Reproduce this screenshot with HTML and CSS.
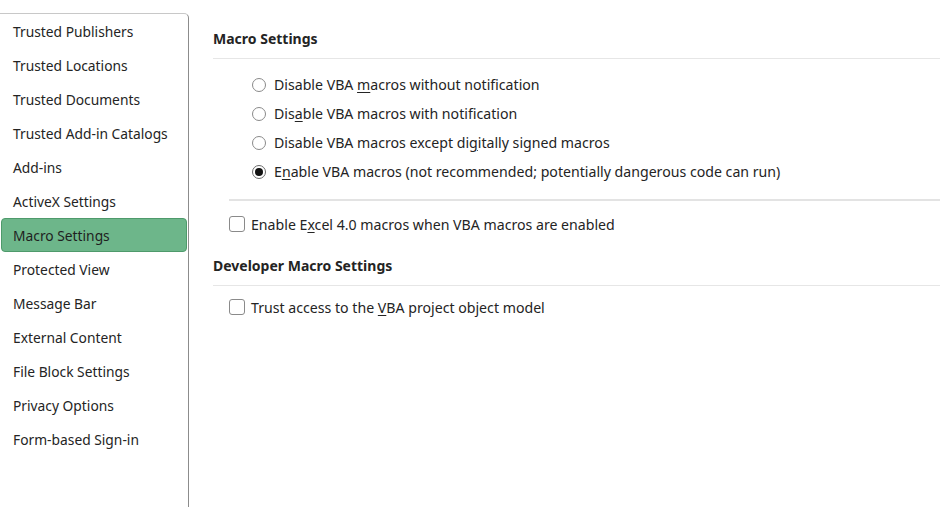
FILE: index.html
```html
<!DOCTYPE html>
<html>
<head>
<meta charset="utf-8">
<link rel="stylesheet" href="styles.css">
</head>
<body>
<div class="page">
  <nav class="sidebar">
    <div class="nav-item">Trusted Publishers</div>
    <div class="nav-item">Trusted Locations</div>
    <div class="nav-item">Trusted Documents</div>
    <div class="nav-item">Trusted Add-in Catalogs</div>
    <div class="nav-item">Add-ins</div>
    <div class="nav-item">ActiveX Settings</div>
    <div class="nav-item selected">Macro Settings</div>
    <div class="nav-item">Protected View</div>
    <div class="nav-item">Message Bar</div>
    <div class="nav-item">External Content</div>
    <div class="nav-item">File Block Settings</div>
    <div class="nav-item">Privacy Options</div>
    <div class="nav-item">Form-based Sign-in</div>
  </nav>
  <main class="content">
    <h2 class="section-title first">Macro Settings</h2>
    <div class="radio-group">
      <div class="radio-row"><span class="radio"></span><span>Disable VBA <u>m</u>acros without notification</span></div>
      <div class="radio-row"><span class="radio"></span><span>Dis<u>a</u>ble VBA macros with notification</span></div>
      <div class="radio-row"><span class="radio"></span><span>Disable VBA macros except di<u>g</u>itally signed macros</span></div>
      <div class="radio-row"><span class="radio checked"></span><span>E<u>n</u>able VBA macros (not recommended; potentially dangerous code can run)</span></div>
    </div>
    <div class="separator"></div>
    <div class="check-row"><span class="checkbox"></span><span>Enable E<u>x</u>cel 4.0 macros when VBA macros are enabled</span></div>
    <h2 class="section-title">Developer Macro Settings</h2>
    <div class="check-row dev"><span class="checkbox"></span><span>Trust access to the <u>V</u>BA project object model</span></div>
  </main>
</div>
</body>
</html>
```

FILE: styles.css
```css
html, body {
  margin: 0;
  padding: 0;
  background: #ffffff;
}
body {
  font-family: "Noto Sans", "Open Sans", sans-serif;
  font-size: 14px;
  color: #242424;
  width: 940px;
  height: 507px;
  overflow: hidden;
}
.page {
  display: flex;
  height: 507px;
}
.sidebar {
  box-sizing: border-box;
  width: 190px;
  margin-left: -1px;
  margin-top: 13px;
  border: 1px solid #8c8c8c;
  border-color: #c8c8c8 #8c8c8c #8c8c8c #8c8c8c;
  border-bottom: none;
  border-radius: 0 5px 0 0;
  flex-shrink: 0;
  display: flex;
  flex-direction: column;
  font-size: 13.8px;
}
.nav-item {
  box-sizing: border-box;
  height: 34px;
  padding-top: 1px;
  line-height: 31px;
  padding-left: 12px;
  border: 1px solid transparent;
  margin-right: 1px;
  white-space: nowrap;
}
.nav-item.selected {
  background: #6db68a;
  border-color: #4e9a6b;
  border-radius: 4px;
  color: #1f1f1f;
  margin-left: 1px;
  padding-left: 11px;
}
.content {
  flex: 1;
  padding-left: 24px;
  display: flex;
  flex-direction: column;
  font-size: 14.15px;
}
.section-title {
  margin: 0;
  font-size: 14px;
  font-weight: 700;
  line-height: 20px;
  padding-bottom: 9px;
  border-bottom: 1px solid #e6e6e6;
}
.section-title.first {
  padding-top: 29px;
}
.radio-group {
  padding-top: 11px;
  padding-left: 39px;
}
.radio-row {
  height: 29px;
  display: flex;
  align-items: center;
  gap: 8px;
  white-space: nowrap;
}
.radio {
  box-sizing: border-box;
  width: 14px;
  height: 14px;
  border: 1px solid #8a8a8a;
  border-radius: 50%;
  flex-shrink: 0;
  display: flex;
  align-items: center;
  justify-content: center;
}
.radio.checked {
  border-color: #6a6a6a;
}
.radio.checked::after {
  content: "";
  width: 8px;
  height: 8px;
  border-radius: 50%;
  background: #111111;
}
.separator {
  margin-top: 13px;
  margin-left: 16px;
  height: 2px;
  background: #e3e3e3;
}
.check-row {
  height: 30px;
  margin-top: 8px;
  padding-left: 16px;
  display: flex;
  align-items: center;
  gap: 6px;
  white-space: nowrap;
}
.check-row + .section-title {
  padding-top: 17px;
}
.check-row.dev {
  margin-top: 6px;
}
.checkbox {
  box-sizing: border-box;
  width: 16px;
  height: 16px;
  border: 1px solid #8a8a8a;
  border-radius: 3px;
  flex-shrink: 0;
}
u {
  text-underline-offset: 2px;
}
```
